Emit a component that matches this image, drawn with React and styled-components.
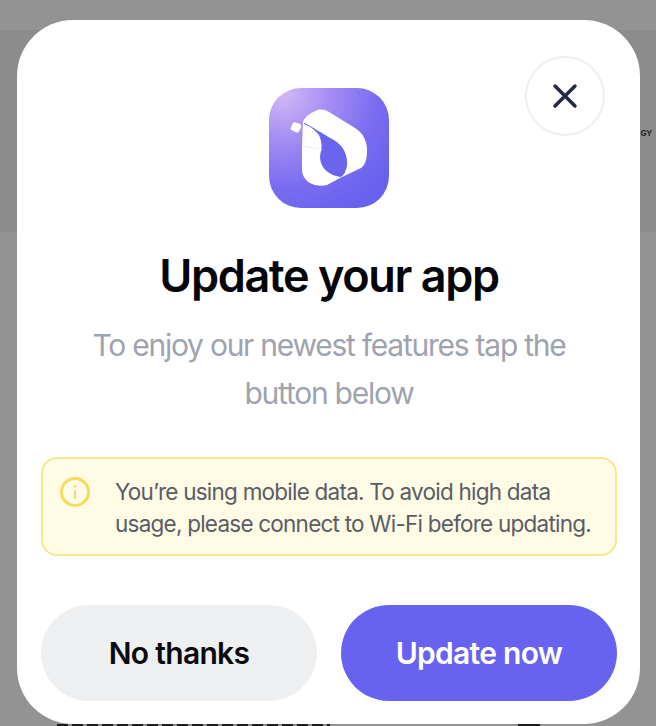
import styled, { createGlobalStyle } from 'styled-components';

const GlobalStyle = createGlobalStyle`
  html, body {
    margin: 0;
    padding: 0;
    background: #909090;
  }
  * {
    box-sizing: border-box;
  }
`;

const Screen = styled.div`
  position: relative;
  width: 656px;
  height: 726px;
  overflow: hidden;
  background: #939393;
  font-family: Inter, 'Liberation Sans', sans-serif;
`;

const HeaderBand = styled.div`
  height: 202px;
  margin-top: 30px;
  padding: 97px 4px 0 0;
  background: #8c8c8c;
  text-align: right;
  font-size: 8px;
  line-height: 12px;
  font-weight: 700;
  color: #1c1c1c;
`;

const PeekRow = styled.div`
  position: absolute;
  left: 57px;
  right: 116px;
  bottom: 0;
  height: 2px;
  display: flex;
  justify-content: space-between;
`;

const PeekText = styled.div`
  width: 273px;
  background: repeating-linear-gradient(90deg, #1c1c1c 0 11px, #8c8c8c 11px 15px);
`;

const PeekIcon = styled.div`
  width: 22px;
  background: #1c1c1c;
`;

const Modal = styled.section`
  position: absolute;
  top: 20px;
  left: 17px;
  width: 623px;
  height: 704px;
  padding: 68px 23px 0 24px;
  display: flex;
  flex-direction: column;
  align-items: center;
  background: #fff;
  border-radius: 56px;
`;

const CloseButton = styled.button`
  position: absolute;
  top: 36px;
  right: 35px;
  width: 80px;
  height: 80px;
  padding: 0;
  display: flex;
  align-items: center;
  justify-content: center;
  background: #fff;
  border: 2px solid #efefef;
  border-radius: 50%;
`;

const AppIcon = styled.div`
  width: 120px;
  height: 120px;
  flex: none;
  border-radius: 32px;
  background: radial-gradient(circle at 12% 4%, #d3b9f6 0%, #a48df3 30%, #7a6cf0 60%, #6761ee 85%);
`;

const Title = styled.h1`
  margin: 38px 0 0;
  font-size: 45px;
  line-height: 60px;
  font-weight: 600;
  letter-spacing: -1.4px;
  color: #05060a;
  text-align: center;
`;

const Subtitle = styled.p`
  margin: 15px 0 0;
  width: 520px;
  font-size: 30px;
  line-height: 48px;
  font-weight: 400;
  letter-spacing: -1.25px;
  color: #9ea3ae;
  text-align: center;
`;

const Notice = styled.div`
  width: 100%;
  height: 99px;
  margin-top: 40px;
  padding: 17px 20px 0 16px;
  display: flex;
  gap: 24px;
  background: #fffbe5;
  border: 2px solid #f5e88f;
  border-radius: 16px;
`;

const NoticeIcon = styled.svg`
  width: 32px;
  height: 32px;
  flex: none;
`;

const NoticeText = styled.p`
  margin: 0;
  font-size: 22.5px;
  line-height: 32px;
  letter-spacing: -0.77px;
  white-space: nowrap;
  color: #5a5d66;
`;

const Actions = styled.div`
  width: 100%;
  margin-top: 49px;
  display: grid;
  grid-template-columns: 1fr 1fr;
  gap: 24px;
`;

const ActionButton = styled.button`
  height: 96px;
  padding: 0;
  border: none;
  border-radius: 48px;
  font-family: inherit;
  font-size: 30px;
  font-weight: 600;
  letter-spacing: -0.7px;
  color: ${props => (props.primary ? '#fff' : '#0a0b10')};
  background: ${props => (props.primary ? '#6762ef' : '#eeeff1')};
`;

const AppLogo = () => (
  <svg width="120" height="120" viewBox="0 0 120 120">
    <path
      fill="#fff"
      d="M49 22C53 21 57 22 60 24L86 40C94 45 98 53 98 62C98 70 97 76 92 80L71 90L58 97C54 98 50 98 46 97C38 95 33 89 33 81L33 58L34 34C36 28 43 24 49 22Z"
    />
    <path
      fill="#6b64ee"
      d="M35 34.700C42 38 54 46 65 52C75 58 79 68 78 78C77 83 75 87 72 89C64 88 57 84 54 79C51 74 50 68 52.500 62C53 56 52 52 50 47C47 43 41 38 35 36Z"
    />
    <path d="M34 58L50 61" stroke="#ecebfd" strokeWidth="1" />
    <rect x="22.500" y="34.800" width="9" height="9" rx="2.500" fill="#fff" transform="rotate(25 27 39.300)" />
  </svg>
);

const App = () => (
  <Screen>
    <GlobalStyle />
    <HeaderBand>GY</HeaderBand>
    <PeekRow>
      <PeekText />
      <PeekIcon />
    </PeekRow>
    <Modal>
      <CloseButton aria-label="Close">
        <svg width="28" height="28" viewBox="0 0 28 28" fill="none" stroke="#1f2a44" strokeWidth="3.500" strokeLinecap="round">
          <path d="M4 4L24 24M24 4L4 24" />
        </svg>
      </CloseButton>
      <AppIcon>
        <AppLogo />
      </AppIcon>
      <Title>Update your app</Title>
      <Subtitle>To enjoy our newest features tap the button below</Subtitle>
      <Notice>
        <NoticeIcon viewBox="0 0 32 32" fill="none">
          <circle cx="16" cy="16" r="13.500" stroke="#f4dd5a" strokeWidth="3" />
          <path d="M16 15V22" stroke="#f0d77a" strokeWidth="2" strokeLinecap="round" />
          <circle cx="16" cy="10.500" r="1.300" fill="#f0d77a" />
        </NoticeIcon>
        <NoticeText>
          You’re using mobile data. To avoid high data
          <br />
          usage, please connect to Wi-Fi before updating.
        </NoticeText>
      </Notice>
      <Actions>
        <ActionButton>No thanks</ActionButton>
        <ActionButton primary>Update now</ActionButton>
      </Actions>
    </Modal>
  </Screen>
);

export default App;
